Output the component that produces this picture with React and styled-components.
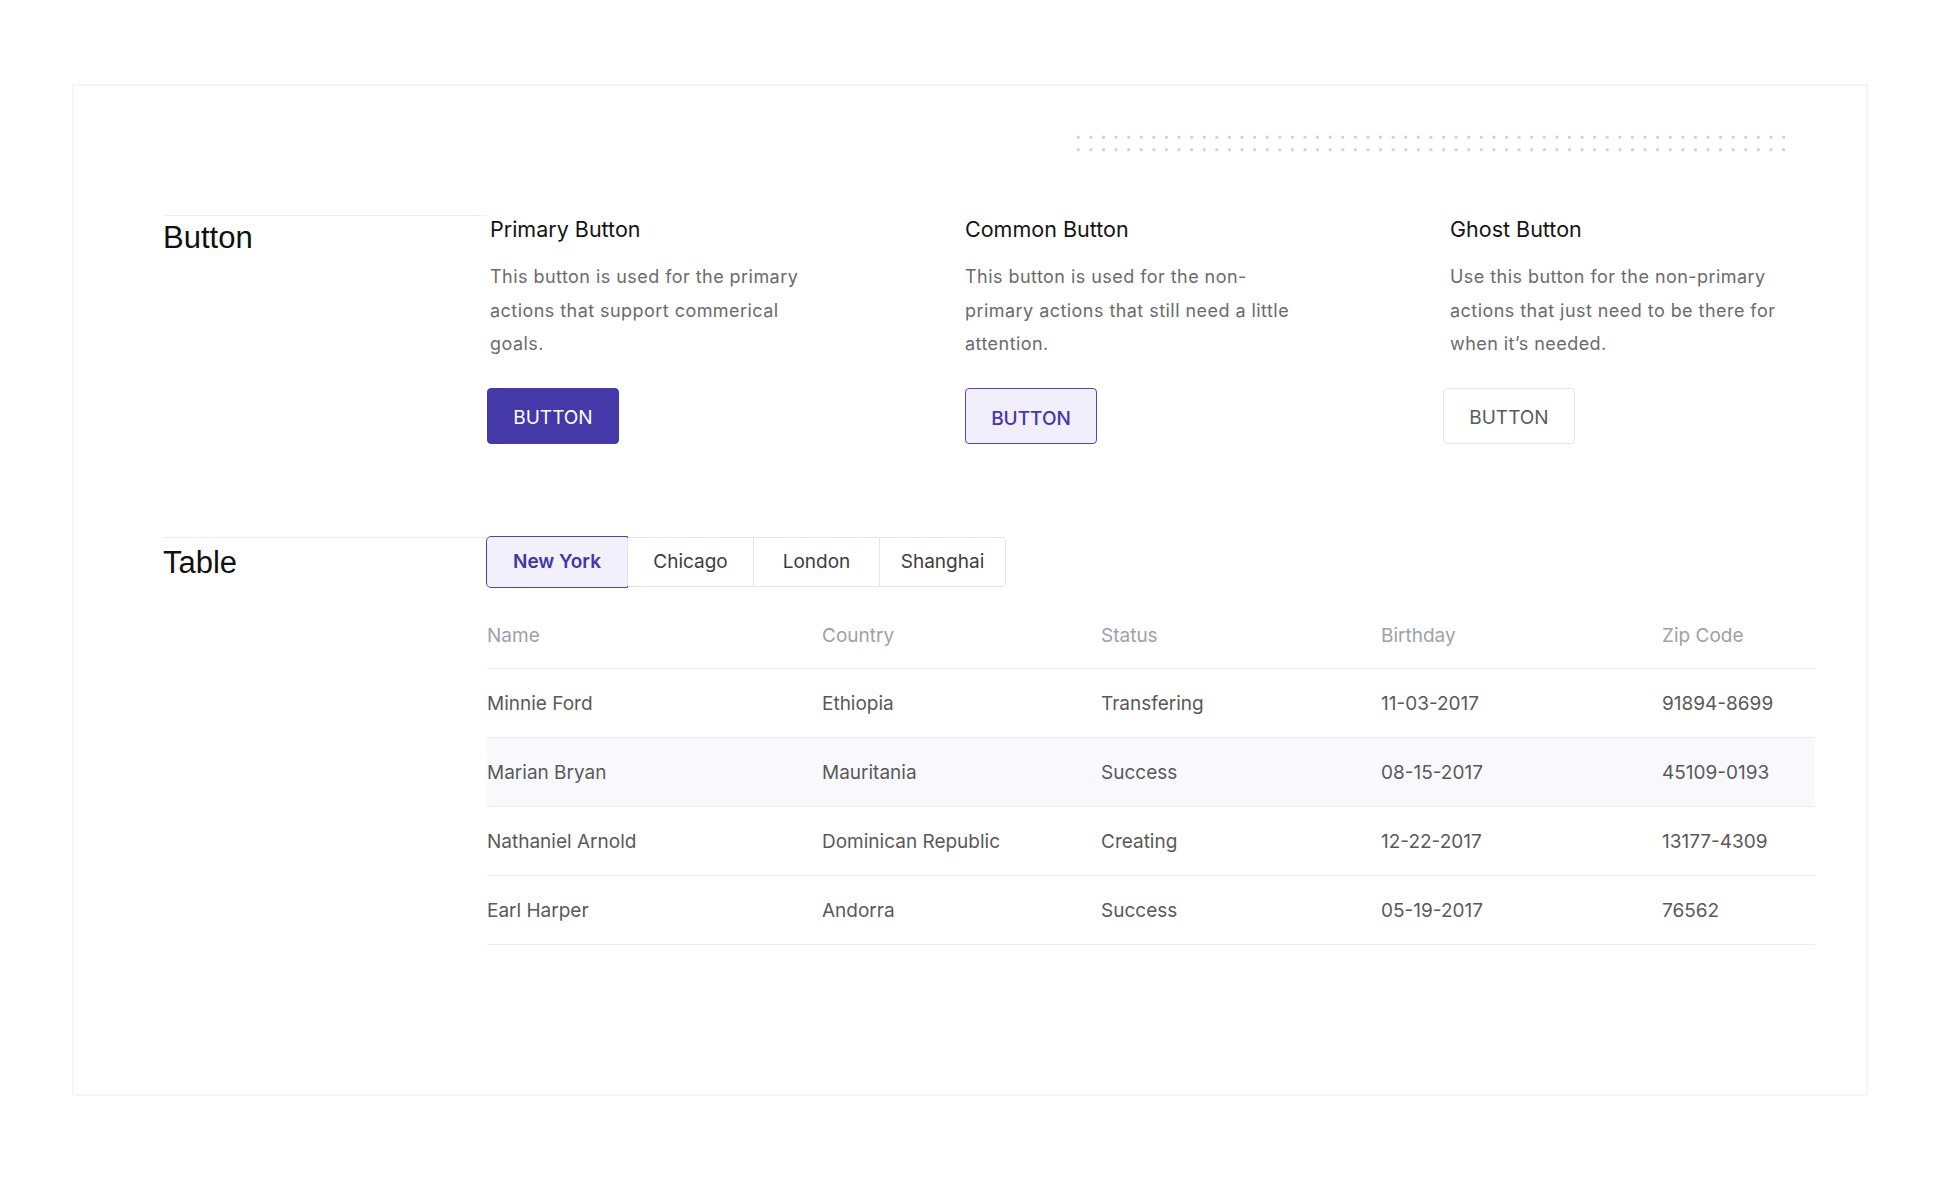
import React, { useState } from "react"
import styled, { createGlobalStyle } from "styled-components"

const GlobalStyle = createGlobalStyle`
  html, body {
    margin: 0;
    padding: 0;
    background: #ffffff;
  }
  body {
    font-family: Inter, "Noto Sans", sans-serif;
    color: #222;
  }
  * {
    box-sizing: border-box;
  }
`

const Page = styled.div`
  padding: 84px 72px 0;
`
const Card = styled.div`
  width: 1796px;
  height: 1012px;
  border: 2px solid #f4f4f9;
  background: #fff;
  display: flex;
  flex-direction: column;
`
const Dots = styled.div`
  align-self: flex-end;
  margin: 45px 76px 0 0;
  width: 718px;
  height: 25px;
  background-image: radial-gradient(circle, #d4d4d8 1.4px, transparent 2px);
  background-size: 12.6px 12.5px;
`
const Section = styled.section`
  display: grid;
  grid-template-columns: 324px 1fr;
  padding-left: 89px;
  margin-top: ${(p) => p.$mt}px;
`
const Label = styled.h2`
  margin: 0;
  border-top: 1px solid #ededf4;
  padding-top: ${(p) => p.$pt}px;
  font-family: "Liberation Sans", Arial, sans-serif;
  font-weight: 400;
  font-size: 31px;
  line-height: 34px;
  color: #111;
`
const Columns = styled.div`
  display: grid;
  grid-template-columns: 478px 478px 1fr;
`
const Column = styled.div`
  display: flex;
  flex-direction: column;
  align-items: flex-start;
`
const ColTitle = styled.h3`
  margin: 0;
  padding-left: ${(p) => p.$indent}px;
  font-size: 21.5px;
  line-height: 28px;
  font-weight: 400;
  color: #141414;
`
const ColText = styled.p`
  margin: 17px 0 0;
  padding-left: ${(p) => p.$indent}px;
  font-size: 18px;
  letter-spacing: 0.45px;
  line-height: 33.5px;
  color: #6b6b6b;
  white-space: nowrap;
`
const Btn = styled.button`
  margin-top: 27px;
  width: 132px;
  height: 56px;
  border-radius: 4px;
  font-family: Inter, sans-serif;
  font-size: 19px;
  cursor: pointer;
  border: ${(p) =>
    p.$kind === "primary"
      ? "1px solid #4539a9"
      : p.$kind === "common"
      ? "1.5px solid #5147ba"
      : "1.5px solid #e6e6ef"};
  background: ${(p) =>
    p.$kind === "primary" ? "#4539a9" : p.$kind === "common" ? "#f1effc" : "#fff"};
  color: ${(p) =>
    p.$kind === "primary" ? "#fff" : p.$kind === "common" ? "#4436ad" : "#5a5a5a"};
  font-weight: ${(p) => (p.$kind === "common" ? 500 : 400)};
  padding-top: ${(p) => (p.$kind === "common" ? 6 : 4)}px;
`
const TableWrap = styled.div`
  display: flex;
  flex-direction: column;
  width: 1328px;
`
const Tabs = styled.div`
  display: flex;
  align-self: flex-start;
  height: 50px;
  border: 1px solid #e4e4ee;
  border-radius: 4px;
`
const Tab = styled.button`
  min-width: 126px;
  padding: 0 ${(p) => (p.$active ? 26 : 18)}px;
  font-family: Inter, sans-serif;
  font-size: 19px;
  cursor: pointer;
  background: ${(p) => (p.$active ? "#f1f0fb" : "#fff")};
  color: ${(p) => (p.$active ? "#4236ad" : "#3d3d3d")};
  font-weight: ${(p) => (p.$active ? 600 : 400)};
  border: none;
  border-left: 1px solid #e4e4ee;
  outline: ${(p) => (p.$active ? "1.5px solid #4e44b8" : "none")};
  border-radius: ${(p) => (p.$active ? "4px 0 0 4px" : "0")};
  margin: ${(p) => (p.$active ? "-1px 0 -1px -1px" : "0")};
  height: ${(p) => (p.$active ? "50px" : "auto")};
  &:first-child {
    border-left: none;
  }
  &:last-child {
    border-radius: 0 4px 4px 0;
  }
`
const Table = styled.table`
  margin-top: 16px;
  width: 100%;
  border-collapse: collapse;
  table-layout: fixed;
`
const Th = styled.th`
  height: 66px;
  padding: 0;
  text-align: left;
  font-weight: 400;
  font-size: 19px;
  color: #a0a0a8;
  border-bottom: 1px solid #ececf4;
`
const Tr = styled.tr`
  background: ${(p) => (p.$alt ? "#f9f9fd" : "#fff")};
`
const Td = styled.td`
  height: 69px;
  padding: 0;
  font-size: 19px;
  color: #595959;
  border-bottom: 1px solid #ececf4;
`

const BUTTONS = [
  {
    id: 1,
    kind: "primary",
    title: "Primary Button",
    lines: ["This button is used for the primary", "actions that support commerical", "goals."],
    indent: 3,
  },
  {
    id: 2,
    kind: "common",
    title: "Common Button",
    lines: ["This button is used for the non-", "primary actions that still need a little", "attention."],
    indent: 0,
  },
  {
    id: 3,
    kind: "ghost",
    title: "Ghost Button",
    lines: ["Use this button for the non-primary", "actions that just need to be there for", "when it\u2019s needed."],
    indent: 7,
  },
]

const CITIES = ["New York", "Chicago", "London", "Shanghai"]

const COLS = [
  { key: "name", label: "Name", width: 335 },
  { key: "country", label: "Country", width: 279 },
  { key: "status", label: "Status", width: 280 },
  { key: "birthday", label: "Birthday", width: 281 },
  { key: "zip", label: "Zip Code" },
]

const ROWS = [
  { name: "Minnie Ford", country: "Ethiopia", status: "Transfering", birthday: "11-03-2017", zip: "91894-8699" },
  { name: "Marian Bryan", country: "Mauritania", status: "Success", birthday: "08-15-2017", zip: "45109-0193" },
  { name: "Nathaniel Arnold", country: "Dominican Republic", status: "Creating", birthday: "12-22-2017", zip: "13177-4309" },
  { name: "Earl Harper", country: "Andorra", status: "Success", birthday: "05-19-2017", zip: "76562" },
]

const App = () => {
  const [city, setCity] = useState("New York")

  return (
    <Page>
      <GlobalStyle />
      <Card>
        <Dots />

        <Section $mt={59}>
          <Label $pt={5}>Button</Label>
          <Columns>
            {BUTTONS.map((item) => (
              <Column key={item.id}>
                <ColTitle $indent={item.indent}>{item.title}</ColTitle>
                <ColText $indent={item.indent}>
                  {item.lines.map((line, i) => (
                    <React.Fragment key={i}>
                      {line}
                      {i < item.lines.length - 1 && <br />}
                    </React.Fragment>
                  ))}
                </ColText>
                <Btn $kind={item.kind}>BUTTON</Btn>
              </Column>
            ))}
          </Columns>
        </Section>

        <Section $mt={93}>
          <Label $pt={8}>Table</Label>
          <TableWrap>
            <Tabs>
              {CITIES.map((c) => (
                <Tab key={c} $active={city === c} onClick={() => setCity(c)}>
                  {c}
                </Tab>
              ))}
            </Tabs>
            <Table>
              <colgroup>
                {COLS.map((col) => (
                  <col key={col.key} style={col.width ? { width: col.width } : undefined} />
                ))}
              </colgroup>
              <thead>
                <tr>
                  {COLS.map((col) => (
                    <Th key={col.key}>{col.label}</Th>
                  ))}
                </tr>
              </thead>
              <tbody>
                {ROWS.map((row, i) => (
                  <Tr key={row.name} $alt={i === 1}>
                    {COLS.map((col) => (
                      <Td key={col.key}>{row[col.key]}</Td>
                    ))}
                  </Tr>
                ))}
              </tbody>
            </Table>
          </TableWrap>
        </Section>
      </Card>
    </Page>
  )
}

export default App
